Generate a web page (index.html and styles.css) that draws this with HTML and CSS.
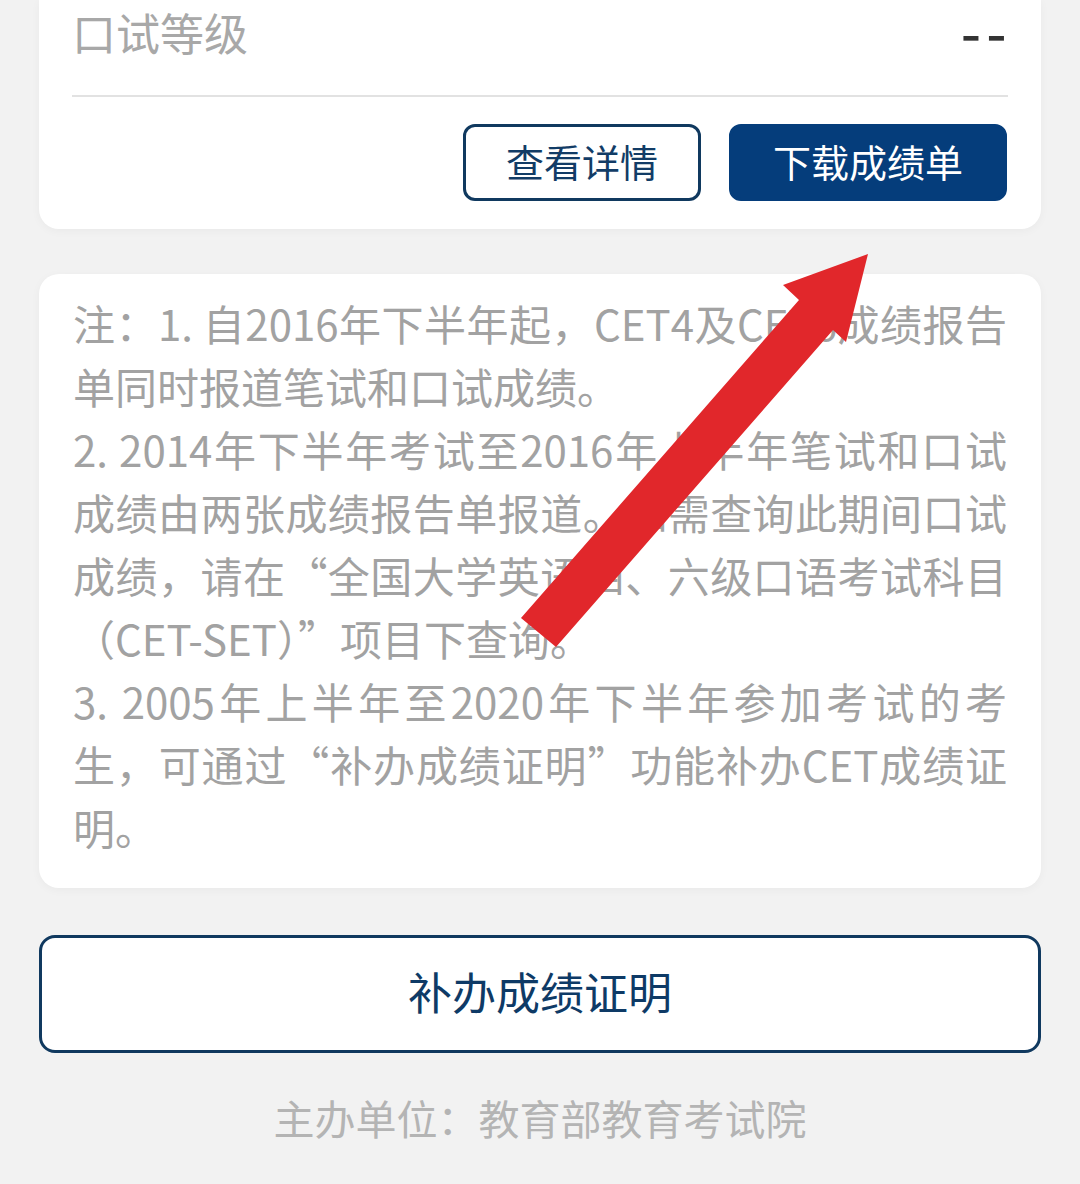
FILE: index.html
```html
<!DOCTYPE html>
<html lang="zh-CN">
<head>
<meta charset="utf-8">
<title>成绩查询</title>
<link rel="stylesheet" href="styles.css">
</head>
<body>
<div class="page">
  <section class="card result">
    <div class="row">
      <span class="label">口试等级</span>
      <span class="value">--</span>
    </div>
    <div class="divider"></div>
    <div class="actions">
      <button class="btn btn-outline">查看详情</button>
      <button class="btn btn-solid">下载成绩单</button>
    </div>
  </section>

  <section class="card notes">
    <p>
      <span class="ln">注：1. 自2016年下半年起，CET4及CET6成绩报告</span>
      <span class="ln end">单同时报道笔试和口试成绩。</span>
    </p>
    <p>
      <span class="ln">2. 2014年下半年考试至2016年上半年笔试和口试</span>
      <span class="ln">成绩由两张成绩报告单报道。如需查询此期间口试</span>
      <span class="ln">成绩，请在“全国大学英语四、六级口语考试科目</span>
      <span class="ln end">（CET-SET）”项目下查询。</span>
    </p>
    <p>
      <span class="ln">3. 2005年上半年至2020年下半年参加考试的考</span>
      <span class="ln">生，可通过“补办成绩证明”功能补办CET成绩证</span>
      <span class="ln end">明。</span>
    </p>
  </section>

  <button class="btn-block">补办成绩证明</button>

  <footer class="footer">主办单位：教育部教育考试院</footer>
</div>

<svg class="arrow" width="1080" height="1184" viewBox="0 0 1080 1184" aria-hidden="true">
  <polygon points="521,618 799,300 783,285 868,254 846,342 833,330 556,647" fill="#e1272b"/>
</svg>
</body>
</html>
```

FILE: styles.css
```css
html, body {
  margin: 0;
  padding: 0;
}

body {
  background: #f2f2f2;
  font-family: "Noto Sans CJK SC", "Noto Sans", sans-serif;
  width: 1080px;
  min-height: 1184px;
  overflow: hidden;
}

.page {
  padding: 0 39px;
  display: flex;
  flex-direction: column;
}

.card {
  background: #ffffff;
  border-radius: 20px;
  box-shadow: 0 2px 10px rgba(0, 0, 0, 0.04);
}

.result {
  border-radius: 0 0 20px 20px;
  padding: 0 33px 28px 33px;
}

.row {
  display: flex;
  justify-content: space-between;
  align-items: center;
  height: 64px;
  padding-bottom: 31px;
}

.label {
  font-size: 44px;
  line-height: 64px;
  color: #a8a8a8;
}

.value {
  display: inline-block;
  font-size: 44px;
  font-weight: 700;
  line-height: 64px;
  color: #333333;
  letter-spacing: 4px;
  margin-right: -4px;
  transform: scaleX(1.25);
  transform-origin: right center;
}

.divider {
  height: 2px;
  background: #e2e2e2;
}

.actions {
  display: flex;
  justify-content: flex-end;
  gap: 28px;
  margin-top: 27px;
}

.btn {
  height: 77px;
  border: 3px solid #10395f;
  border-radius: 12px;
  font-family: inherit;
  font-size: 38px;
  line-height: 1;
  padding-bottom: 5px;
  cursor: pointer;
}

.btn-outline {
  background: #ffffff;
  color: #123c66;
  padding-left: 40px;
  padding-right: 40px;
}

.btn-solid {
  background: #053d7b;
  border-color: #053d7b;
  color: #ffffff;
  padding-left: 41px;
  padding-right: 41px;
  margin-right: 1px;
}

.notes {
  margin-top: 45px;
  padding: 17px 34px 30px 34px;
  font-size: 42px;
  line-height: 63px;
  color: #a2a2a2;
}

.notes p {
  margin: 0;
}

.ln {
  display: block;
  text-align: justify;
  text-align-last: justify;
  white-space: nowrap;
}

.ln.end {
  text-align-last: left;
}

.btn-block {
  margin-top: 47px;
  height: 118px;
  width: 100%;
  background: #ffffff;
  border: 3px solid #10395f;
  border-radius: 16px;
  font-family: inherit;
  font-size: 44px;
  color: #0e3a66;
  padding-bottom: 7px;
  cursor: pointer;
}

.footer {
  margin-top: 34px;
  text-align: center;
  font-size: 41px;
  line-height: 60px;
  color: #b4b4b4;
}

.arrow {
  position: absolute;
  top: 0;
  left: 0;
  pointer-events: none;
}
```
